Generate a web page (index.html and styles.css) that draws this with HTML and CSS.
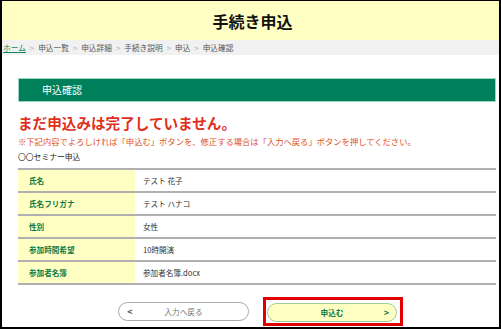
FILE: index.html
```html
<!DOCTYPE html>
<html>
<head>
  <meta charset="utf-8">
  <title>手続き申込</title>
  <link rel="stylesheet" href="styles.css">
</head>
<body>
  <div class="frame">
    <header class="site-header">
      <h1>手続き申込</h1>
    </header>
    <nav class="breadcrumb">
      <a href="#">ホーム</a><span class="sep">&gt;</span>申込一覧<span class="sep">&gt;</span>申込詳細<span class="sep">&gt;</span>手続き説明<span class="sep">&gt;</span>申込<span class="sep">&gt;</span>申込確認
    </nav>
    <main class="content">
      <h2 class="section-bar">申込確認</h2>
      <p class="warning">まだ申込みは完了していません。</p>
      <p class="note">※下記内容でよろしければ「申込む」ボタンを、修正する場合は「入力へ戻る」ボタンを押してください。</p>
      <p class="form-name">〇〇セミナー申込</p>
      <table class="confirm">
        <tr><th>氏名</th><td>テスト 花子</td></tr>
        <tr><th>氏名フリガナ</th><td>テスト ハナコ</td></tr>
        <tr><th>性別</th><td>女性</td></tr>
        <tr><th>参加時間希望</th><td>10時開演</td></tr>
        <tr><th>参加者名簿</th><td>参加者名簿.docx</td></tr>
      </table>
      <div class="actions">
        <button class="btn btn-back"><span class="arrow">&lt;</span><span>入力へ戻る</span><span class="arrow"></span></button>
        <div class="highlight">
          <button class="btn btn-submit"><span class="arrow"></span><span>申込む</span><span class="arrow">&gt;</span></button>
        </div>
      </div>
    </main>
  </div>
</body>
</html>
```

FILE: styles.css
```css
body {
  margin: 0;
  font-family: "Noto Sans CJK JP", "Noto Sans", sans-serif;
  color: #333;
  background: #fff;
  overflow: hidden;
}
.frame {
  height: 329px;
  box-sizing: border-box;
  border: 2px solid #000;
  border-top-width: 1px;
  overflow: hidden;
}
.site-header {
  height: 39px;
  background: #ffffc4;
  display: flex;
  align-items: center;
  justify-content: center;
}
.site-header h1 {
  margin: 0 0 0 4px;
  font-size: 16px;
  font-weight: bold;
  color: #111;
}
.breadcrumb {
  height: 15px;
  line-height: 15px;
  background: #f1f1f1;
  padding-left: 1px;
  font-size: 7.7px;
  color: #555;
  white-space: nowrap;
}
.breadcrumb a {
  color: #0a8a5a;
  text-decoration: underline;
}
.breadcrumb .sep {
  color: #aaa;
  margin: 0 4px;
}
.content {
  padding: 23px 3px 0 16px;
}
.section-bar {
  margin: 0;
  height: 22px;
  line-height: 22px;
  background: #00805a;
  border: 1px solid #9fd6c8;
  color: #fff;
  font-size: 10px;
  font-weight: normal;
  padding-left: 23px;
}
.warning {
  margin: 12px 0 0;
  font-size: 14.6px;
  line-height: 18px;
  font-weight: bold;
  color: #e0301c;
}
.note {
  margin: 3px 0 0;
  font-size: 8.3px;
  line-height: 12px;
  color: #e0502a;
  white-space: nowrap;
}
.form-name {
  margin: 4px 0 0;
  font-size: 7.8px;
  line-height: 12px;
  color: #222;
}
.confirm {
  margin-top: 5px;
  width: 100%;
  border-collapse: collapse;
  font-size: 7.6px;
}
.confirm th,
.confirm td {
  height: 21px;
  padding: 0;
  border-top: 2px solid #b0b0b0;
  border-bottom: 2px solid #b0b0b0;
  text-align: left;
}
.confirm th {
  width: 106px;
  padding-left: 11px;
  background: #ffffc4;
  color: #0f7a45;
  font-weight: bold;
}
.confirm td {
  padding-left: 8px;
  color: #333;
}
.actions {
  display: flex;
  align-items: flex-start;
  justify-content: center;
  gap: 14px;
  margin-top: 12px;
  padding-left: 7px;
}
.btn {
  width: 131px;
  height: 19px;
  border-radius: 10px;
  display: flex;
  align-items: center;
  justify-content: space-between;
  padding: 0 7px;
  box-sizing: border-box;
  font-family: inherit;
  font-size: 7.6px;
  cursor: pointer;
}
.btn .arrow {
  width: 8px;
  font-size: 9px;
  font-weight: bold;
}
.btn-back {
  margin-top: 5px;
  background: #fff;
  border: 1px solid #aaa;
  color: #777;
}
.btn-back .arrow {
  color: #555;
}
.highlight {
  border: 3px solid #e00000;
  padding: 3px 3px 1px 1px;
}
.btn-submit {
  width: 130px;
  background: #ffffc4;
  border: 1px solid #9ccc9c;
  color: #0f7a45;
  font-weight: bold;
}
.btn-submit .arrow {
  text-align: right;
  color: #0f7a45;
}
```
